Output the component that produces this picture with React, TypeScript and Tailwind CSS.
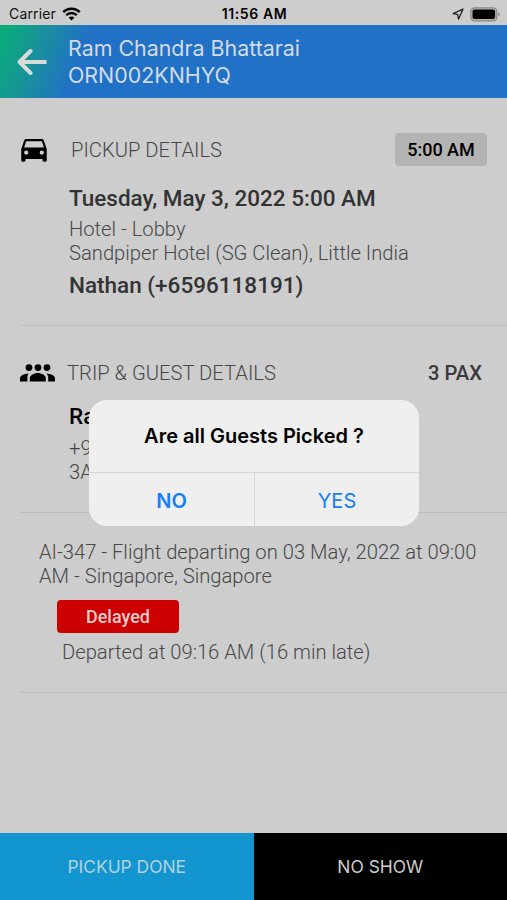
import React from 'react';
import { MdDirectionsCar } from 'react-icons/md';
import { clsx } from 'clsx';

const StatusBar: React.FC = () => (
  <div className="grid h-[25px] grid-cols-3 items-center pl-[9px] pr-[7px] pt-[2px] font-['Inter',sans-serif] text-[14px] font-normal text-[#111111]">
    <div className="flex items-center gap-[6px]">
      <span className="tracking-[0.15px]">Carrier</span>
      <svg width="19" height="14" viewBox="0 0 19 14" fill="none" stroke="#000" strokeWidth="2.5">
        <path d="M1.2 5.2C5.8 .5 13.2 .5 17.8 5.2" />
        <path d="M4.2 8.2C7.2 5.3 11.8 5.3 14.8 8.2" />
        <path d="M9.5 13.6 6.6 10.6C8.2 9.1 10.8 9.1 12.4 10.6Z" fill="#000" stroke="none" />
      </svg>
    </div>
    <span className="-mr-px -ml-px text-center font-semibold tracking-[0.6px] text-black">11:56 AM</span>
    <div className="flex items-center justify-end gap-[6px]">
      <svg width="12" height="12" viewBox="0 0 12 12" fill="none" stroke="#222" strokeWidth="1.3" strokeLinejoin="round">
        <path d="M11 1 1.2 5.6 5.6 6.4 6.6 11Z" />
      </svg>
      <svg width="30" height="15" viewBox="0 0 30 15">
        <rect x=".8" y=".8" width="26" height="13" rx="3.6" fill="#b4b4b4" stroke="#8b8b8b" strokeWidth="1.2" />
        <rect x="2.5" y="2.5" width="22.6" height="9.6" rx="2" fill="#000" />
        <path d="M28.2 5v4.6q1.5-.7 1.5-2.3T28.2 5Z" fill="#8b8b8b" />
      </svg>
    </div>
  </div>
);

const Header: React.FC = () => (
  <header className="flex h-[73px] items-center bg-[linear-gradient(110deg,#0baa7c_8px,#1a8da0_48px,#2171c6_86px)] pl-[17px] font-['Inter',sans-serif] font-normal text-[#d3dbe6]">
    <svg width="30" height="28" viewBox="0 0 30 28" fill="none" stroke="#d6dbd9" strokeWidth="4" strokeLinecap="round" strokeLinejoin="round">
      <path d="M13.5 3 2.5 14 13.5 25" />
      <path d="M3.5 14H29.5" strokeLinecap="butt" />
    </svg>
    <h1 className="ml-[21px] text-[21.4px] leading-[27px]">
      Ram Chandra Bhattarai
      <br />
      ORN002KNHYQ
    </h1>
  </header>
);

const GuestsIcon: React.FC = () => (
  <svg width="35" height="18" viewBox="0 0 35 18" fill="#000">
    <circle cx="9" cy="3.6" r="3.4" />
    <circle cx="18" cy="3.6" r="3.4" />
    <circle cx="27" cy="3.6" r="3.4" />
    <path d="M9.8 17.4v-3.2c0-2.8 4.4-5.1 8-5.1s8 2.3 8 5.1v3.2Z" />
    <path d="M0 17.4v-3c0-2.7 3.6-4.6 8.6-4.9C7.8 10.6 7.4 12 7.4 13.8v3.6Z" />
    <path d="M35 17.4v-3c0-2.7-3.6-4.6-8.6-4.9 1.2 1.1 1.8 2.5 1.8 4.3v3.6Z" />
  </svg>
);

const AlertDialog: React.FC<{ title: string }> = ({ title }) => (
  <div
    role="alertdialog"
    className="absolute left-[89px] top-[400px] h-[126px] w-[330px] overflow-hidden rounded-[18px] bg-[#efefef] font-['Inter',sans-serif]"
  >
    <div className="flex h-[73px] items-center justify-center border-b border-[#d6d6d6] text-[20px] font-semibold text-black">
      {title}
    </div>
    <div className="grid h-[53px] grid-cols-[166px_1fr] text-[20px] text-[#147efb]">
      <button className="border-r border-[#d6d6d6] pt-[2px] font-semibold">NO</button>
      <button className="pt-[2px] font-normal">YES</button>
    </div>
  </div>
);

const Section: React.FC<{ className?: string; children: React.ReactNode }> = ({ className, children }) => (
  <section className={clsx('ml-[20px] border-b border-[#bebebe]', className)}>{children}</section>
);

export default function App() {
  return (
    <div className="relative flex h-[900px] w-[507px] flex-col overflow-hidden bg-[#cdcdcd] font-['Roboto',sans-serif] text-[20.2px] font-light leading-[24px] text-[#484848]">
      <StatusBar />
      <Header />

      <main className="flex-1">
        <Section className="h-[228px] pt-[35px]">
          <div className="flex h-[33px] items-center pr-[20px]">
            <MdDirectionsCar size={34} className="-ml-[3px] mb-[2px] text-black" />
            <h2 className="ml-[20px] flex-1">PICKUP DETAILS</h2>
            <span className="flex h-[33px] w-[92px] items-center justify-center rounded-[4px] bg-[#b3b3b3] text-[18px] font-medium text-black">
              5:00 AM
            </span>
          </div>
          <div className="ml-[49px] mt-[19px]">
            <p className="text-[22.5px] font-medium leading-[26px] text-[#333333]">Tuesday, May 3, 2022 5:00 AM</p>
            <p className="mt-[6px]">Hotel - Lobby</p>
            <p>Sandpiper Hotel (SG Clean), Little India</p>
            <p className="mt-[7px] text-[22.5px] font-medium leading-[26px] text-[#333333]">Nathan (+6596118191)</p>
          </div>
        </Section>

        <Section className="h-[187px] pt-[34px]">
          <div className="flex h-[26px] items-center pr-[25px]">
            <GuestsIcon />
            <h2 className="ml-[12px] flex-1">TRIP &amp; GUEST DETAILS</h2>
            <span className="font-medium text-[#3a3a3a]">3 PAX</span>
          </div>
          <div className="ml-[49px] mt-[17px]">
            <p className="text-[22.5px] font-medium leading-[26px] text-black">Ra</p>
            <p className="mt-[7px]">+9</p>
            <p>3A</p>
          </div>
        </Section>

        <Section className="h-[180px] pt-[27px]">
          <p className="ml-[19px]">
            AI-347 - Flight departing on 03 May, 2022 at 09:00
            <br />
            AM - Singapore, Singapore
          </p>
          <span className="ml-[37px] mt-[12px] flex h-[33px] w-[122px] items-center justify-center rounded-[4px] bg-[#cc0000] text-[18px] font-medium text-[#e8cccc]">
            Delayed
          </span>
          <p className="ml-[42px] mt-[7px]">Departed at 09:16 AM (16 min late)</p>
        </Section>
      </main>

      <footer className="grid h-[67px] grid-cols-2 font-['Inter',sans-serif] text-[17.4px] font-normal text-[#cdcdcd]">
        <button className="bg-[#1395cf] pt-px text-[#b4d2df]">PICKUP DONE</button>
        <button className="bg-black pt-px">NO SHOW</button>
      </footer>

      <AlertDialog title="Are all Guests Picked ?" />
    </div>
  );
}
